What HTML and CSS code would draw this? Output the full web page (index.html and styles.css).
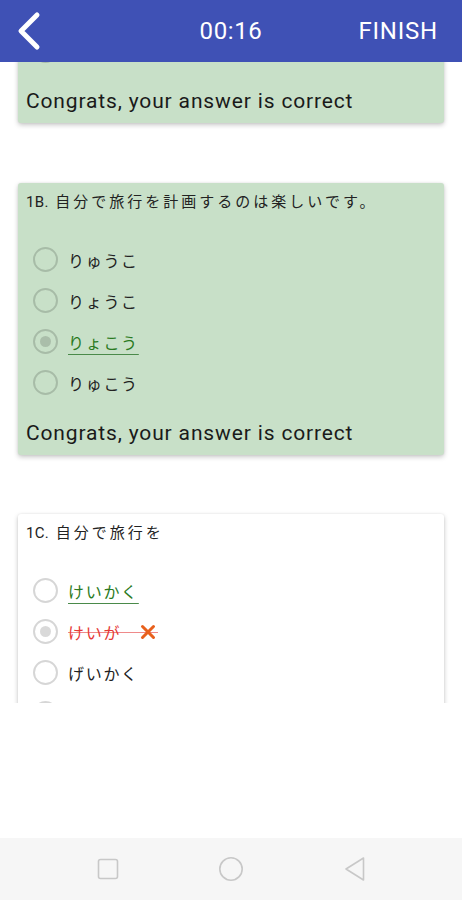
FILE: index.html
```html
<!DOCTYPE html>
<html lang="ja">
<head>
<meta charset="utf-8">
<title>Quiz</title>
<link rel="stylesheet" href="styles.css">
</head>
<body>
<div class="screen">
  <header class="appbar">
    <div class="back">
      <svg width="30" height="40" viewBox="0 0 30 40"><path d="M21 4 L5 20 L21 36" fill="none" stroke="#fff" stroke-width="5" stroke-linecap="round" stroke-linejoin="round"/></svg>
    </div>
    <div class="timer">00:16</div>
    <div class="finish">FINISH</div>
  </header>

  <main class="viewport">
    <div class="list">
      <section class="card correct scrolled">
        <ul class="options">
          <li class="opt"><span class="radio"></span></li>
        </ul>
        <p class="result">Congrats, your answer is correct</p>
      </section>

      <section class="card correct">
        <p class="question"><span class="num">1B.</span> 自分で旅行を計画するのは楽しいです。</p>
        <ul class="options">
          <li class="opt"><span class="radio"></span><span class="label">りゅうこ</span></li>
          <li class="opt"><span class="radio"></span><span class="label">りょうこ</span></li>
          <li class="opt"><span class="radio checked"></span><span class="label right">りょこう</span></li>
          <li class="opt"><span class="radio"></span><span class="label">りゅこう</span></li>
        </ul>
        <p class="result">Congrats, your answer is correct</p>
      </section>

      <section class="card last">
        <p class="question"><span class="num">1C.</span> 自分で旅行を</p>
        <ul class="options">
          <li class="opt"><span class="radio"></span><span class="label right">けいかく</span></li>
          <li class="opt"><span class="radio checked"></span><span class="label wrong">けいが<svg class="xmark" width="16" height="16" viewBox="0 0 16 16"><path d="M2.5 2.5 L13.5 13.5 M13.5 2.5 L2.5 13.5" stroke="#e8601c" stroke-width="3" stroke-linecap="round"/></svg></span></li>
          <li class="opt"><span class="radio"></span><span class="label">げいかく</span></li>
          <li class="opt"><span class="radio"></span></li>
        </ul>
      </section>
    </div>
  </main>

  <div class="spacer"></div>

  <nav class="navbar">
    <svg width="24" height="24" viewBox="0 0 24 24"><rect x="2.5" y="2.5" width="19" height="19" rx="2" fill="none" stroke="#c8c8c8" stroke-width="1.6"/></svg>
    <svg width="26" height="26" viewBox="0 0 26 26"><circle cx="13" cy="13" r="11.2" fill="none" stroke="#c8c8c8" stroke-width="1.6"/></svg>
    <svg width="24" height="28" viewBox="0 0 24 28"><path d="M3 14 L20.5 3 L20.5 25 Z" fill="none" stroke="#c8c8c8" stroke-width="1.6" stroke-linejoin="round"/></svg>
  </nav>
</div>
</body>
</html>
```
FILE: styles.css
```css
* { box-sizing: border-box; }

html, body {
  margin: 0;
  padding: 0;
  background: #ffffff;
}

body {
  font-family: Roboto, "Noto Sans CJK JP", sans-serif;
  color: #1d1d1d;
}

.screen {
  width: 462px;
  height: 900px;
  display: flex;
  flex-direction: column;
  overflow: hidden;
}

.appbar {
  height: 62px;
  flex: 0 0 62px;
  background: #3f51b5;
  color: #fff;
  display: grid;
  grid-template-columns: 1fr auto 1fr;
  align-items: center;
  position: relative;
  z-index: 2;
}

.back {
  padding-left: 16px;
  display: flex;
  align-items: center;
}

.timer {
  font-size: 24px;
  letter-spacing: 0.6px;
}

.finish {
  justify-self: end;
  padding-right: 24px;
  font-size: 24px;
  letter-spacing: 0.8px;
}

.viewport {
  height: 641px;
  flex: 0 0 641px;
  overflow: hidden;
}

.list {
  margin-top: -40px;
  display: flex;
  flex-direction: column;
  gap: 60px;
  padding: 0 18px;
}

.card {
  background: #ffffff;
  border-radius: 3px;
  box-shadow: 0 2px 5px rgba(0, 0, 0, 0.22), 0 0 2px rgba(0, 0, 0, 0.08);
  padding: 8px;
}

.card.last {
  margin-top: -1px;
}

.card.correct {
  background: #c8e0c8;
}

.question {
  margin: 0;
  font-family: Roboto, "Noto Sans CJK JP", sans-serif;
  font-size: 15px;
  line-height: 22px;
  letter-spacing: 3px;
  color: #222;
}

.question .num {
  letter-spacing: 0.3px;
}

.options {
  list-style: none;
  margin: 26px 0 0 0;
  padding: 0;
}

.scrolled .options {
  margin-top: 0;
}

.opt {
  height: 41px;
  display: flex;
  align-items: center;
  padding-left: 7px;
}

.radio {
  width: 25px;
  height: 25px;
  flex: 0 0 25px;
  border: 2px solid rgba(0, 0, 0, 0.16);
  border-radius: 50%;
  display: flex;
  align-items: center;
  justify-content: center;
}

.radio.checked::after {
  content: "";
  width: 11px;
  height: 11px;
  border-radius: 50%;
  background: rgba(0, 0, 0, 0.15);
}

.label {
  margin-left: 10px;
  font-family: "Noto Sans CJK JP", sans-serif;
  font-size: 16px;
  letter-spacing: 1.7px;
  color: #222;
}

.label.right {
  color: #2a7a22;
  text-decoration: underline;
  text-decoration-thickness: 1px;
  text-underline-offset: 5px;
  text-decoration-color: #4a8a4a;
}

.label.wrong {
  color: #e53935;
  display: inline-flex;
  align-items: center;
  padding-right: 2px;
  background: linear-gradient(to bottom, transparent calc(50% - 0.5px), #ef8a8a calc(50% - 0.5px), #ef8a8a calc(50% + 0.5px), transparent calc(50% + 0.5px));
}

.xmark {
  margin-left: 19px;
}

.result {
  margin: 16px 0 0 0;
  font-family: Roboto, sans-serif;
  font-size: 21px;
  line-height: 28px;
  letter-spacing: 0.85px;
  color: #1a1a1a;
}

.spacer {
  flex: 1 1 auto;
}

.navbar {
  height: 62px;
  flex: 0 0 62px;
  background: #f6f6f6;
  display: flex;
  align-items: center;
  justify-content: center;
}

.navbar svg:nth-child(1) { margin-right: 98px; }
.navbar svg:nth-child(2) { margin-right: 99px; }
```
